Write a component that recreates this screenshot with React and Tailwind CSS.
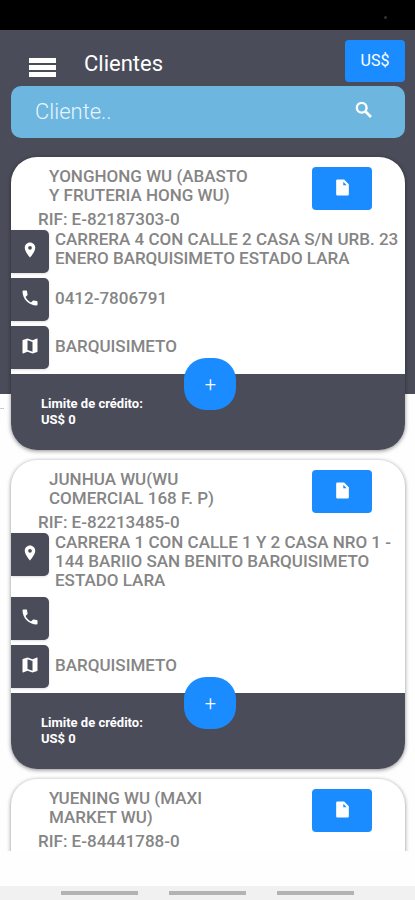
import { useState } from "react";
import { MdMap, MdPhone, MdPlace } from "react-icons/md";

const clients = [
  {
    id: 1,
    name: "YONGHONG WU (ABASTO Y FRUTERIA HONG WU)",
    rif: "E-82187303-0",
    details: {
      address: "CARRERA 4 CON CALLE 2 CASA S/N URB. 23 ENERO BARQUISIMETO ESTADO LARA",
      phone: "0412-7806791",
      city: "BARQUISIMETO",
      credit: 0,
    },
  },
  {
    id: 2,
    name: "JUNHUA WU(WU COMERCIAL 168 F. P)",
    rif: "E-82213485-0",
    details: {
      address: "CARRERA 1 CON CALLE 1 Y 2 CASA NRO 1 - 144 BARIIO SAN BENITO BARQUISIMETO ESTADO LARA",
      phone: "",
      city: "BARQUISIMETO",
      credit: 0,
    },
  },
  {
    id: 3,
    name: "YUENING WU (MAXI MARKET WU)",
    rif: "E-84441788-0",
    details: null,
  },
];

function DocumentIcon() {
  return (
    <svg viewBox="0 0 24 24" width="19" height="19" fill="currentColor" aria-hidden="true">
      <path
        fillRule="evenodd"
        d="M5.5 2H14l6 6v12.5a1.5 1.5 0 0 1-1.5 1.5h-13A1.5 1.5 0 0 1 4 20.5v-17A1.5 1.5 0 0 1 5.5 2zM13 4.8V9h4.2z"
      />
    </svg>
  );
}

function SearchIcon() {
  return (
    <svg viewBox="0 0 24 24" width="22" height="22" fill="none" stroke="currentColor" aria-hidden="true">
      <circle cx="9.5" cy="9.5" r="5.3" strokeWidth="2.6" />
      <path d="M13.6 13.6l6 6" strokeWidth="3" />
    </svg>
  );
}

function InfoRow({ icon, label, children }) {
  return (
    <div className="flex items-start min-h-11 mb-1">
      <button
        type="button"
        aria-label={label}
        className="w-[38px] h-[43px] pb-[3px] shrink-0 rounded-r-[5px] bg-[#4b4c59] text-white flex items-center justify-center shadow-sm"
      >
        {icon}
      </button>
      {children}
    </div>
  );
}

function ClientCard({ client }) {
  const { name, rif, details } = client;

  return (
    <article className="min-h-[293px] rounded-[26px] bg-white shadow-[0_1px_4px_rgba(0,0,0,0.45)] overflow-hidden shrink-0">
      <div className="text-[17px] leading-[19px] font-medium text-[#858585]">
        <div className="flex items-start justify-between pt-[10px] pr-[33px] pb-px">
          <div>
            <h2 className="pl-[38px] w-[244px] h-10 mb-[3px]">{name}</h2>
            <p className="pl-[27px]">RIF: {rif}</p>
          </div>
          <button
            type="button"
            aria-label="Documento"
            className="w-[60px] h-[43px] pb-[3px] rounded bg-[#1b8cff] text-white flex items-center justify-center"
          >
            <DocumentIcon />
          </button>
        </div>
        {details && (
          <>
            <InfoRow icon={<MdPlace size={18} />} label="Ubicación">
              <p className="flex-1 pl-[6px] pb-[3px]">{details.address}</p>
            </InfoRow>
            <InfoRow icon={<MdPhone size={20} />} label="Llamar">
              <p className="flex-1 pl-[6px] pt-[11px]">{details.phone}</p>
            </InfoRow>
            <InfoRow icon={<MdMap size={20} />} label="Mapa">
              <p className="flex-1 pl-[6px] pt-[11px]">{details.city}</p>
            </InfoRow>
          </>
        )}
      </div>
      {details && (
        <footer className="relative h-[76px] bg-[#4b4c59] pt-[22px] pl-[30px] text-white text-[13px] leading-4 font-bold">
          <p>Limite de crédito:</p>
          <p>US$ {details.credit}</p>
          <button
            type="button"
            aria-label="Agregar"
            className="absolute left-[44%] -top-4 size-[52px] rounded-[22px] bg-[#1b8cff] text-xl font-light flex items-center justify-center"
          >
            +
          </button>
        </footer>
      )}
    </article>
  );
}

export default function App() {
  const [search, setSearch] = useState("");

  return (
    <div className="h-screen flex flex-col bg-[#fefefe] font-[Roboto,sans-serif]">
      <div className="h-[30px] shrink-0 bg-black flex justify-end items-center pt-1 pr-7">
        <span className="size-[3px] rounded-full bg-[#333333]" />
      </div>

      <div className="relative flex-1 min-h-0 flex flex-col bg-[linear-gradient(#4b4c59_364px,#fefefe_364px)]">
        <span className="absolute left-0 top-[371px] text-[8px] leading-3 text-gray-600">..</span>

        <header className="flex justify-between pt-[10px] px-[10px] pb-1 text-white">
          <div className="flex items-center pt-[5px] pl-[19px]">
            <button type="button" aria-label="Menú" className="flex flex-col gap-[2px] pt-2">
              <span className="w-[27px] h-[5px] bg-white" />
              <span className="w-[27px] h-[5px] bg-white" />
              <span className="w-[27px] h-[5px] bg-white" />
            </button>
            <h1 className="pl-7 text-[22px] leading-7">Clientes</h1>
          </div>
          <button type="button" className="w-[60px] h-[42px] rounded bg-[#1b8cff] text-base">
            US$
          </button>
        </header>

        <div className="ml-[11px] mr-[10px] h-[52px] shrink-0 rounded-[10px] bg-[#6cb6e0] flex items-center pl-6 pr-[30px] text-white">
          <input
            type="text"
            aria-label="Buscar cliente"
            placeholder="Cliente.."
            value={search}
            onChange={(e) => setSearch(e.target.value)}
            className="flex-1 min-w-0 text-[22px] leading-7 font-light bg-transparent outline-none placeholder:text-[#e6f5fc]"
          />
          <button type="button" aria-label="Buscar" className="pb-1">
            <SearchIcon />
          </button>
        </div>

        <main className="mt-3 mb-[35px] flex-1 min-h-0 overflow-y-auto [scrollbar-width:none] flex flex-col gap-[10px] pl-[11px] pr-[10px] pt-[7px]">
          {clients.map((client) => (
            <ClientCard key={client.id} client={client} />
          ))}
        </main>
      </div>

      <nav className="h-[14px] shrink-0 bg-[#f1f1f1] flex items-center justify-center gap-[31px]">
        <span className="w-[77px] h-1 bg-[#b3b3b3]" />
        <span className="w-[77px] h-1 bg-[#b3b3b3]" />
        <span className="w-[77px] h-1 bg-[#b3b3b3]" />
      </nav>
    </div>
  );
}
